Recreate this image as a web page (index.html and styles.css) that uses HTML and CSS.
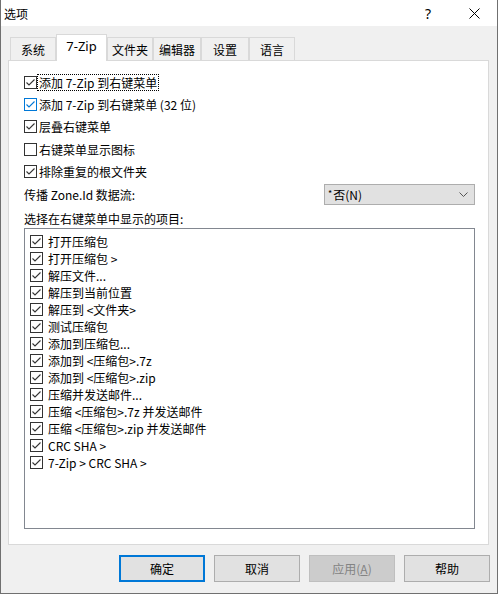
FILE: index.html
```html
<!DOCTYPE html>
<html lang="zh-CN">

<head>
  <meta charset="UTF-8" />
  <title>选项</title>
  <link rel="stylesheet" href="styles.css">
</head>

<body>
  <div class="window">
    <div class="titlebar">
      <span class="title">选项</span>
      <span class="caption-btn help">?</span>
      <span class="caption-btn">
        <svg width="11" height="11" viewBox="0 0 11 11"><path d="M0.5 0.5 L10.5 10.5 M10.5 0.5 L0.5 10.5" stroke="#000" stroke-width="1" fill="none"/></svg>
      </span>
    </div>

    <div class="content">
      <div class="tabs">
        <div class="tab" style="width: 46px;">系统</div>
        <div class="tab active" style="width: 51px;">7-Zip</div>
        <div class="tab" style="width: 46px;">文件夹</div>
        <div class="tab" style="width: 48px;">编辑器</div>
        <div class="tab" style="width: 48px;">设置</div>
        <div class="tab" style="width: 46px;">语言</div>
      </div>

      <div class="page">
        <div class="opcao">
          <span class="box"><svg width="11" height="11" viewBox="0 0 11 11"><path d="M1.5 5.5 L4 8 L9.5 2.5" /></svg></span>
          <span class="opcao-texto focus">添加 7-Zip 到右键菜单</span>
        </div>
        <div class="opcao hover">
          <span class="box"><svg width="11" height="11" viewBox="0 0 11 11"><path d="M1.5 5.5 L4 8 L9.5 2.5" /></svg></span>
          <span class="opcao-texto">添加 7-Zip 到右键菜单 (32 位)</span>
        </div>
        <div class="opcao">
          <span class="box"><svg width="11" height="11" viewBox="0 0 11 11"><path d="M1.5 5.5 L4 8 L9.5 2.5" /></svg></span>
          <span class="opcao-texto">层叠右键菜单</span>
        </div>
        <div class="opcao">
          <span class="box"></span>
          <span class="opcao-texto">右键菜单显示图标</span>
        </div>
        <div class="opcao">
          <span class="box"><svg width="11" height="11" viewBox="0 0 11 11"><path d="M1.5 5.5 L4 8 L9.5 2.5" /></svg></span>
          <span class="opcao-texto">排除重复的根文件夹</span>
        </div>

        <div class="zone-row">
          <span>传播 Zone.Id 数据流:</span>
          <div class="combo">
            <span class="combo-valor"><span class="asterisco">*</span>否(N)</span>
            <svg width="9" height="5" viewBox="0 0 9 5"><path d="M0.5 0.5 L4.5 4.5 L8.5 0.5" stroke="#555" fill="none"/></svg>
          </div>
        </div>

        <div class="lista-titulo">选择在右键菜单中显示的项目:</div>

        <div class="lista">
          <div class="item"><span class="box"><svg width="11" height="11" viewBox="0 0 11 11"><path d="M1.5 5.5 L4 8 L9.5 2.5" /></svg></span>打开压缩包</div>
          <div class="item"><span class="box"><svg width="11" height="11" viewBox="0 0 11 11"><path d="M1.5 5.5 L4 8 L9.5 2.5" /></svg></span>打开压缩包 &gt;</div>
          <div class="item"><span class="box"><svg width="11" height="11" viewBox="0 0 11 11"><path d="M1.5 5.5 L4 8 L9.5 2.5" /></svg></span>解压文件...</div>
          <div class="item"><span class="box"><svg width="11" height="11" viewBox="0 0 11 11"><path d="M1.5 5.5 L4 8 L9.5 2.5" /></svg></span>解压到当前位置</div>
          <div class="item"><span class="box"><svg width="11" height="11" viewBox="0 0 11 11"><path d="M1.5 5.5 L4 8 L9.5 2.5" /></svg></span>解压到 &lt;文件夹&gt;</div>
          <div class="item"><span class="box"><svg width="11" height="11" viewBox="0 0 11 11"><path d="M1.5 5.5 L4 8 L9.5 2.5" /></svg></span>测试压缩包</div>
          <div class="item"><span class="box"><svg width="11" height="11" viewBox="0 0 11 11"><path d="M1.5 5.5 L4 8 L9.5 2.5" /></svg></span>添加到压缩包...</div>
          <div class="item"><span class="box"><svg width="11" height="11" viewBox="0 0 11 11"><path d="M1.5 5.5 L4 8 L9.5 2.5" /></svg></span>添加到 &lt;压缩包&gt;.7z</div>
          <div class="item"><span class="box"><svg width="11" height="11" viewBox="0 0 11 11"><path d="M1.5 5.5 L4 8 L9.5 2.5" /></svg></span>添加到 &lt;压缩包&gt;.zip</div>
          <div class="item"><span class="box"><svg width="11" height="11" viewBox="0 0 11 11"><path d="M1.5 5.5 L4 8 L9.5 2.5" /></svg></span>压缩并发送邮件...</div>
          <div class="item"><span class="box"><svg width="11" height="11" viewBox="0 0 11 11"><path d="M1.5 5.5 L4 8 L9.5 2.5" /></svg></span>压缩 &lt;压缩包&gt;.7z 并发送邮件</div>
          <div class="item"><span class="box"><svg width="11" height="11" viewBox="0 0 11 11"><path d="M1.5 5.5 L4 8 L9.5 2.5" /></svg></span>压缩 &lt;压缩包&gt;.zip 并发送邮件</div>
          <div class="item"><span class="box"><svg width="11" height="11" viewBox="0 0 11 11"><path d="M1.5 5.5 L4 8 L9.5 2.5" /></svg></span>CRC SHA &gt;</div>
          <div class="item"><span class="box"><svg width="11" height="11" viewBox="0 0 11 11"><path d="M1.5 5.5 L4 8 L9.5 2.5" /></svg></span>7-Zip &gt; CRC SHA &gt;</div>
        </div>
      </div>

      <div class="botoes">
        <button class="botao padrao">确定</button>
        <button class="botao">取消</button>
        <button class="botao" disabled>应用(<u>A</u>)</button>
        <button class="botao">帮助</button>
      </div>
    </div>
  </div>
</body>

</html>
```

FILE: styles.css
```css
:root {
  --fundo: #f0f0f0;
  --borda-aba: #d9d9d9;
  --azul: #0078d7;
  --caixa: #333;
}

body {
  margin: 0;
  font-family: "Noto Sans CJK SC", "Noto Sans", sans-serif;
  font-size: 12px;
  color: #000;
}

.window {
  width: 498px;
  height: 594px;
  box-sizing: border-box;
  border: 1px solid #707070;
  border-top: none;
  background-color: var(--fundo);
  display: flex;
  flex-direction: column;
}

.titlebar {
  height: 26px;
  background-color: #fff;
  display: flex;
  align-items: center;
  padding-left: 3px;
}

.title {
  flex: 1;
}

.caption-btn {
  width: 46px;
  height: 26px;
  display: flex;
  align-items: center;
  justify-content: center;
}

.help {
  font-family: "Noto Sans", sans-serif;
  font-size: 14px;
}

/* abas */
.content {
  flex: 1;
  padding: 8px 8px 0 7px;
  display: flex;
  flex-direction: column;
}

.tabs {
  display: flex;
  align-items: flex-end;
  height: 26px;
  padding-left: 2px;
  position: relative;
  z-index: 1;
}

.tab {
  height: 23px;
  box-sizing: border-box;
  border: 1px solid var(--borda-aba);
  border-bottom: none;
  display: flex;
  align-items: center;
  justify-content: center;
  margin-bottom: 0;
}

.tab.active {
  height: 27px;
  margin-bottom: -1px;
  background-color: #fff;
  font-family: "Noto Sans", sans-serif;
  font-size: 13px;
  padding-bottom: 4px;
}

.page {
  height: 485px;
  box-sizing: border-box;
  border: 1px solid var(--borda-aba);
  background-color: #fff;
  padding: 10px 13px 0 15px;
}

/* caixas de seleção */
.box {
  width: 13px;
  height: 13px;
  box-sizing: border-box;
  border: 1px solid var(--caixa);
  background-color: #fff;
  display: flex;
  flex-shrink: 0;
}

.box svg path {
  fill: none;
  stroke: var(--caixa);
  stroke-width: 1.1;
}

.opcao {
  height: 22.3px;
  display: flex;
  align-items: center;
  gap: 1px;
}

.opcao-texto {
  padding: 0 1px;
  line-height: 15px;
}

.opcao-texto.focus {
  outline: 1px dotted #000;
}

.opcao.hover .box {
  border-color: var(--azul);
}

.opcao.hover .box svg path {
  stroke: var(--azul);
}

.zone-row {
  display: flex;
  align-items: center;
  justify-content: space-between;
  height: 22px;
  margin-top: 1.5px;
  margin-bottom: 4px;
}

.combo {
  width: 151px;
  height: 21px;
  box-sizing: border-box;
  background-color: #e1e1e1;
  border: 1px solid #adadad;
  display: flex;
  align-items: center;
  justify-content: space-between;
  padding: 0 6px 0 3px;
}

.asterisco {
  font-size: 9px;
  vertical-align: 3px;
  margin-right: 1px;
}

.lista-titulo {
  height: 18px;
  line-height: 18px;
}

.lista {
  height: 301px;
  box-sizing: border-box;
  border: 1px solid #828790;
  padding: 4px 0 0 5px;
}

.item {
  height: 17px;
  display: flex;
  align-items: center;
  gap: 5px;
}

/* botões */
.botoes {
  display: flex;
  justify-content: flex-end;
  gap: 9px;
  margin-top: 10px;
  margin-right: -1px;
}

.botao {
  width: 86px;
  height: 27px;
  box-sizing: border-box;
  background-color: #e1e1e1;
  border: 1px solid #adadad;
  font-family: inherit;
  font-size: 12px;
  color: #000;
  padding: 0;
}

.botao.padrao {
  border: 2px solid var(--azul);
}

.botao:disabled {
  background-color: #cccccc;
  border-color: #bfbfbf;
  color: #838383;
}
```
